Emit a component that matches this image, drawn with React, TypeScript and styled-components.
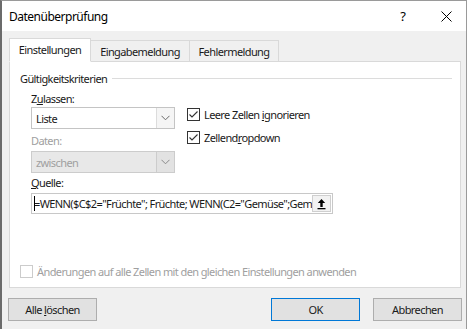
import React from 'react';
import styled, { createGlobalStyle } from 'styled-components';

const GlobalStyle = createGlobalStyle`
  html, body {
    margin: 0;
    padding: 0;
    background: #ffffff;
  }
  body {
    font-family: "Noto Sans", "Segoe UI", sans-serif;
    font-size: 11px;
    letter-spacing: -0.6px;
    color: #000000;
  }
`;

const Window = styled.div`
  width: 467px;
  height: 329px;
  box-sizing: border-box;
  border-left: 2px solid #6b6b6b;
  border-top: 1px solid #9a9a9a;
  border-right: 1px solid #9a9a9a;
  background: #f0f0f0;
  display: flex;
  flex-direction: column;
`;

const TitleBar = styled.div`
  height: 30px;
  background: #ffffff;
  display: flex;
  align-items: center;
  padding-left: 7px;
`;

const Title = styled.span`
  flex: 1;
  font-size: 12px;
  letter-spacing: -0.5px;
  margin-top: 1px;
`;

const TitleButton = styled.div<{ w: number }>`
  width: ${p => p.w}px;
  height: 30px;
  display: flex;
  align-items: center;
  justify-content: center;
  font-size: 13px;
  letter-spacing: 0;
`;

const Body = styled.div`
  flex: 1;
  display: flex;
  flex-direction: column;
  padding: 7px 4px 0 7px;
`;

const TabStrip = styled.div`
  display: flex;
  align-items: flex-end;
  height: 23px;
  position: relative;
  z-index: 1;
`;

const Tab = styled.div<{ active?: boolean; w: number }>`
  width: ${p => p.w}px;
  height: ${p => (p.active ? 24 : 21)}px;
  box-sizing: border-box;
  display: flex;
  align-items: center;
  justify-content: center;
  padding-bottom: ${p => (p.active ? 2 : 0)}px;
  background: ${p => (p.active ? '#ffffff' : '#f0f0f0')};
  border: 1px solid #d9d9d9;
  border-bottom: ${p => (p.active ? '1px solid #ffffff' : 'none')};
  margin-left: ${p => (p.active ? 0 : -1)}px;
  margin-bottom: ${p => (p.active ? -1 : 0)}px;
  color: #1a1a1a;
`;

const Panel = styled.div`
  height: 227px;
  width: 452px;
  box-sizing: border-box;
  background: #ffffff;
  border: 1px solid #d9d9d9;
  padding: 9px 8px 0 10px;
  display: flex;
  flex-direction: column;
`;

const GroupHeader = styled.div`
  display: flex;
  align-items: center;
  gap: 5px;
  height: 14px;
  color: #1a1a1a;
`;

const GroupLine = styled.div`
  flex: 1;
  height: 1px;
  background: #dcdcdc;
  margin-top: 1px;
`;

const GroupBody = styled.div`
  padding-left: 11px;
  display: flex;
  flex-direction: column;
`;

const Row = styled.div`
  display: flex;
  gap: 12px;
`;

const Column = styled.div`
  display: flex;
  flex-direction: column;
`;

const Label = styled.div<{ disabled?: boolean; top: number; bottom: number }>`
  margin-top: ${p => p.top}px;
  margin-bottom: ${p => p.bottom}px;
  height: 15px;
  line-height: 15px;
  color: ${p => (p.disabled ? '#a0a0a0' : '#1a1a1a')};
`;

const Combo = styled.div<{ disabled?: boolean }>`
  width: 144px;
  height: 22px;
  box-sizing: border-box;
  border: 1px solid ${p => (p.disabled ? '#cccccc' : '#c4c4c4')};
  background: ${p => (p.disabled ? '#e8e8e8' : '#ffffff')};
  display: flex;
  color: ${p => (p.disabled ? '#a0a0a0' : '#1a1a1a')};
`;

const ComboText = styled.div`
  flex: 1;
  padding-left: 4px;
  display: flex;
  align-items: center;
`;

const ComboArrow = styled.div<{ disabled?: boolean }>`
  width: 17px;
  border-left: 1px solid ${p => (p.disabled ? '#cccccc' : '#dcdcdc')};
  background: ${p => (p.disabled ? '#e2e2e2' : '#f5f5f5')};
  display: flex;
  align-items: center;
  justify-content: center;
`;

const Checks = styled.div`
  display: flex;
  flex-direction: column;
  gap: 8px;
  margin-top: 22px;
`;

const CheckRow = styled.div<{ disabled?: boolean }>`
  display: flex;
  align-items: center;
  gap: 4px;
  height: 15px;
  color: ${p => (p.disabled ? '#a0a0a0' : '#1a1a1a')};
`;

const Box = styled.div<{ disabled?: boolean }>`
  width: 13px;
  height: 13px;
  box-sizing: border-box;
  border: 1px solid ${p => (p.disabled ? '#cccccc' : '#333333')};
  background: #ffffff;
  display: flex;
  align-items: center;
  justify-content: center;
`;

const SourceField = styled.div`
  width: 302px;
  height: 21px;
  box-sizing: border-box;
  border: 1px solid #c8c8c8;
  display: flex;
  align-items: center;
`;

const SourceText = styled.div`
  flex: 1;
  overflow: hidden;
  white-space: nowrap;
  padding-left: 2px;
  position: relative;
  color: #1a1a1a;
`;

const Caret = styled.span`
  position: absolute;
  left: 2px;
  top: 0;
  width: 1px;
  height: 15px;
  background: #000000;
`;

const PickButton = styled.div`
  width: 19px;
  height: 17px;
  margin-right: 1px;
  box-sizing: border-box;
  border: 1px solid #cfcfcf;
  background: #f2f2f2;
  display: flex;
  align-items: center;
  justify-content: center;
`;

const FooterCheck = styled.div`
  margin-top: auto;
  margin-bottom: 8px;
`;

const Buttons = styled.div`
  display: flex;
  align-items: center;
  padding-top: 10px;
  margin-left: -1px;
`;

const Button = styled.div<{ primary?: boolean; gapLeft?: number }>`
  width: 89px;
  height: 23px;
  margin-left: ${p => p.gapLeft ?? 0}px;
  box-sizing: border-box;
  border: 1px solid ${p => (p.primary ? '#0078d7' : '#adadad')};
  background: #e1e1e1;
  display: flex;
  align-items: center;
  justify-content: center;
  color: #1a1a1a;
`;

const Spacer = styled.div`
  flex: 1;
`;

const U = styled.span`
  text-decoration: underline;
  text-underline-offset: 1px;
`;

const Chevron = ({ color }: { color: string }) => (
  <svg width="9" height="6" viewBox="0 0 9 6">
    <path d="M0.5 0.8 L4.5 4.8 L8.5 0.8" fill="none" stroke={color} strokeWidth="1" />
  </svg>
);

const Check = () => (
  <svg width="11" height="11" viewBox="0 0 11 11">
    <path d="M1.5 5.5 L4 8 L9.5 2.5" fill="none" stroke="#333333" strokeWidth="1.1" />
  </svg>
);

const UploadIcon = () => (
  <svg width="11" height="12" viewBox="0 0 11 12">
    <path d="M5.5 1 L1.8 5 H4.3 V9 H6.7 V5 H9.2 Z" fill="#000000" />
    <rect x="1.5" y="10" width="8" height="1.3" fill="#000000" />
  </svg>
);

const App: React.FC = () => {
  return (
    <>
      <GlobalStyle />
      <Window>
        <TitleBar>
          <Title>Datenüberprüfung</Title>
          <TitleButton w={46}>?</TitleButton>
          <TitleButton w={40}>
            <svg width="11" height="11" viewBox="0 0 11 11">
              <path d="M0.5 0.5 L10.5 10.5 M10.5 0.5 L0.5 10.5" stroke="#000000" strokeWidth="1" />
            </svg>
          </TitleButton>
        </TitleBar>
        <Body>
          <TabStrip>
            <Tab active w={82}>Einstellungen</Tab>
            <Tab w={100}>Eingabemeldung</Tab>
            <Tab w={90}>Fehlermeldung</Tab>
          </TabStrip>
          <Panel>
            <GroupHeader>
              <span>Gültigkeitskriterien</span>
              <GroupLine />
            </GroupHeader>
            <GroupBody>
              <Row>
                <Column>
                  <Label top={6} bottom={1}>
                    Z<U>u</U>lassen:
                  </Label>
                  <Combo>
                    <ComboText>Liste</ComboText>
                    <ComboArrow>
                      <Chevron color="#6a6a6a" />
                    </ComboArrow>
                  </Combo>
                  <Label top={4} bottom={3} disabled>
                    Daten:
                  </Label>
                  <Combo disabled>
                    <ComboText>zwischen</ComboText>
                    <ComboArrow disabled>
                      <Chevron color="#8a8a8a" />
                    </ComboArrow>
                  </Combo>
                </Column>
                <Checks>
                  <CheckRow>
                    <Box>
                      <Check />
                    </Box>
                    <span>
                      Leere Zellen <U>i</U>gnorieren
                    </span>
                  </CheckRow>
                  <CheckRow>
                    <Box>
                      <Check />
                    </Box>
                    <span>
                      Zellend<U>r</U>opdown
                    </span>
                  </CheckRow>
                </Checks>
              </Row>
              <Label top={2} bottom={3}>
                <U>Q</U>uelle:
              </Label>
              <SourceField>
                <SourceText>
                  <Caret />
                  =WENN($C$2="Früchte"; Früchte; WENN(C2="Gemüse";Gemüse))
                </SourceText>
                <PickButton>
                  <UploadIcon />
                </PickButton>
              </SourceField>
            </GroupBody>
            <FooterCheck>
              <CheckRow disabled>
                <Box disabled />
                <span>Änderungen auf alle Zellen mit den gleichen Einstellungen anwenden</span>
              </CheckRow>
            </FooterCheck>
          </Panel>
          <Buttons>
            <Button>
              <span>
                Alle <U>l</U>öschen
              </span>
            </Button>
            <Spacer />
            <Button primary>OK</Button>
            <Button gapLeft={13}>Abbrechen</Button>
          </Buttons>
        </Body>
      </Window>
    </>
  );
};

export default App;
